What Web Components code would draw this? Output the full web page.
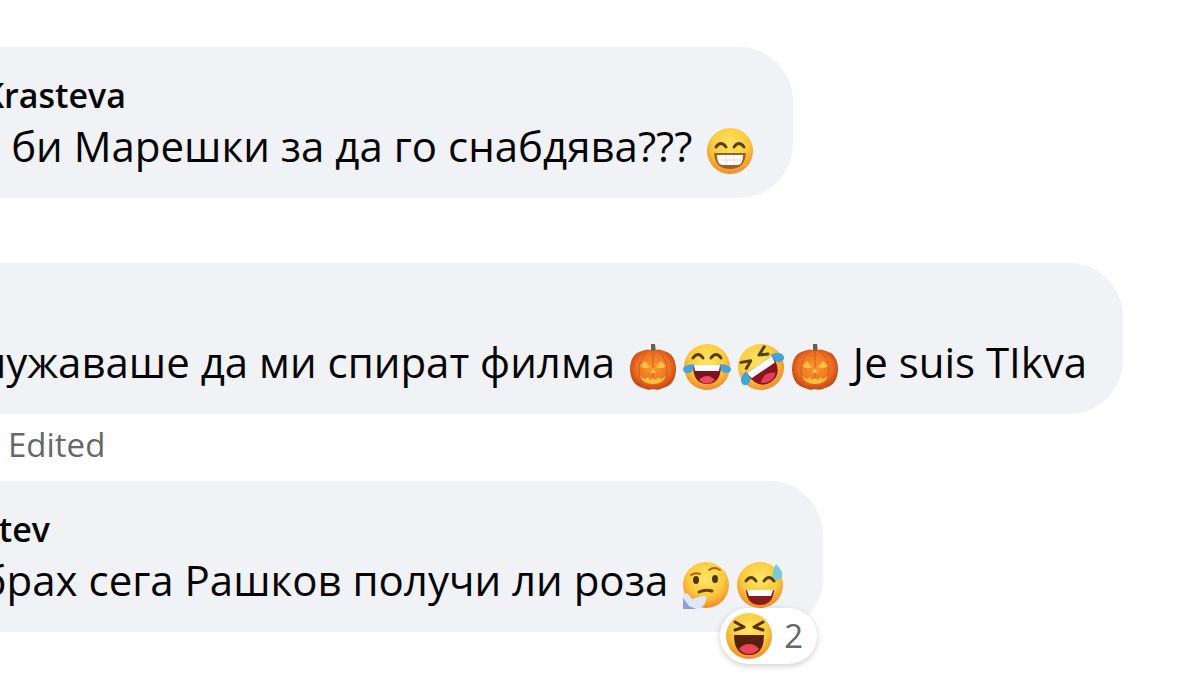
<!DOCTYPE html>
<html lang="bg">
<head>
<meta charset="utf-8">
<meta name="viewport" content="width=device-width, initial-scale=1">
<title>Comments</title>
<style>
  body {
    margin: 0;
    background-color: #ffffff;
    font-family: 'Open Sans', 'Noto Sans', sans-serif;
  }
</style>
</head>
<body>

<comment-thread>
  <comment-item style="--bubble-width: 66.1%; --name-width: 126px">
    <span slot="author">Krasteva</span>
    би Марешки за да го снабдява??? <emoji-icon name="beaming"></emoji-icon>
  </comment-item>
  <comment-item class="spaced" style="--bubble-width: 93.6%">
    лужаваше да ми спират филма <emoji-icon name="pumpkin"></emoji-icon><emoji-icon name="joy"></emoji-icon><emoji-icon name="rofl"></emoji-icon><emoji-icon name="pumpkin"></emoji-icon> Je suis TIkva
    <button slot="actions" type="button">Edited</button>
  </comment-item>
  <comment-item style="--bubble-width: 68.6%; --name-width: 50px">
    <span slot="author">tev</span>
    брах сега Рашков получи ли роза <emoji-icon name="thinking"></emoji-icon><emoji-icon name="sweat"></emoji-icon>
    <reaction-count slot="reactions" count="2"></reaction-count>
  </comment-item>
</comment-thread>

<script>
  const FACE = `
    <defs>
      <radialGradient id="skin" cx="50%" cy="35%" r="65%">
        <stop offset="0" stop-color="#ffe566"/>
        <stop offset="0.6" stop-color="#fcca3e"/>
        <stop offset="1" stop-color="#f08a2c"/>
      </radialGradient>
    </defs>
    <circle cx="24" cy="24" r="23" fill="url(#skin)"/>`;

  const SMILE_EYES = `
    <path d="M10 20q5-7 10 0M28 20q5-7 10 0" fill="none" stroke="#55400f" stroke-width="3" stroke-linecap="round"/>`;

  const EMOJI = {
    beaming: `${FACE}${SMILE_EYES}
      <path d="M8 26h32q-1 16-16 16T8 26z" fill="#9a6420"/>
      <path d="M11 28h26q0 10-6 10H17q-6 0-6-10z" fill="#ffffff"/>
      <path d="M12 33h24M20 28v10M28 28v10" stroke="#e3dfd8" stroke-width="1"/>`,
    joy: `${FACE}
      <path d="M10 15q5-7 10 0M28 15q5-7 10 0" fill="none" stroke="#55400f" stroke-width="3" stroke-linecap="round"/>
      <path d="M10 22h28q0 19-14 19T10 22z" fill="#7a1420"/>
      <path d="M11 22h26l-1 6H12z" fill="#ffffff"/>
      <path d="M16 37q8-8 16 0-8 7-16 0z" fill="#ee4a5c"/>
      <path d="M11 21q0 9-6 9-5 0-5-4 0-4 11-5zM37 21q0 9 6 9 5 0 5-4 0-4-11-5z" fill="#3fa5dc"/>`,
    rofl: `<g transform="rotate(-34 24 24)">${FACE}
      <path d="M10 9l9 4-8 4M38 9l-9 4 8 4" fill="none" stroke="#55400f" stroke-width="3" stroke-linecap="round" stroke-linejoin="round"/>
      <path d="M8 21h32q-1 21-16 21T8 21z" fill="#8a1420"/>
      <path d="M9 21h30l-1 7H10z" fill="#ffffff"/>
      <path d="M15 37q9-8 18 0-9 8-18 0z" fill="#e53e58"/>
      <path d="M9 19q1 12-5 12-5 0-5-4 0-6 10-8zM39 19q-1 12 5 12 5 0 5-4 0-6-10-8z" fill="#3fa5dc"/></g>`,
    pumpkin: `
      <defs>
        <radialGradient id="rind" cx="50%" cy="45%" r="60%">
          <stop offset="0" stop-color="#fb9a2e"/>
          <stop offset="0.6" stop-color="#ee7124"/>
          <stop offset="1" stop-color="#b9380f"/>
        </radialGradient>
      </defs>
      <path d="M22 9l0-8 4 0 1 8z" fill="#6d6048"/>
      <path d="M24 8q5-3 11 0 12 3 12 19-1 15-13 18-5 3-10 1-5 2-10-1Q2 42 1 27 1 11 13 8q6-3 11 0z" fill="url(#rind)"/>
      <path d="M18 9q-9 9-8 20t6 16M30 9q9 9 8 20t-6 16M24 9v36" fill="none" stroke="#d85a1b" stroke-width="1"/>
      <path d="M11 23l5-5 5 6q-5 3-10-1zM37 23l-5-5-5 6q5 3 10-1zM21 30l3-5 3 5z" fill="#ffc042"/>
      <path d="M11 33l5 3 3-2 2 3 3-2 3 2 2-3 3 2 5-3q-3 8-13 8t-13-8z" fill="#ffc042"/>`,
    thinking: `${FACE}
      <path d="M9 14q4-3 9-1M27 9q5-4 11 0" fill="none" stroke="#a8641a" stroke-width="2" stroke-linecap="round"/>
      <ellipse cx="14" cy="19" rx="3" ry="4" fill="#4a3511"/>
      <ellipse cx="33" cy="18" rx="3" ry="4" fill="#4a3511"/>
      <path d="M17 31q6-3 13-1" fill="none" stroke="#6a4514" stroke-width="3" stroke-linecap="round"/>
      <path d="M1 48V35q3-5 6-1l3 4 11-3q5 0 3 4-2 9-10 9z" fill="#dfe6f8"/>
      <path d="M1 48V37l6 8 7 3z" fill="#8d9ee0"/>`,
    sweat: `${FACE}${SMILE_EYES}
      <path d="M10 29h28q-1 15-14 15T10 29z" fill="#8a1c1c"/>
      <path d="M11 29h26l-2 6H13z" fill="#ffffff"/>
      <path d="M40 3q8 8 6 13-3 5-8 2-4-4 2-15z" fill="#79cbdc"/>`,
    laughing: `${FACE}
      <path d="M10 10l9 5-9 3M38 10l-9 5 9 3" fill="none" stroke="#55300f" stroke-width="3" stroke-linecap="round" stroke-linejoin="round"/>
      <path d="M9 23h30q0 20-15 20T9 23z" fill="#56200f"/>
      <path d="M14 37q4-5 10-5t10 5q-4 5-10 5t-10-5z" fill="#ef4358"/>`
  };

  class EmojiIcon extends HTMLElement {
    connectedCallback() {
      if (this.shadowRoot) return;
      const name = this.getAttribute('name');
      this.attachShadow({ mode: 'open' });
      this.shadowRoot.innerHTML = `
        <style>
          :host {
            display: inline-block;
            width: 48px;
            height: 48px;
            margin: 0 3px;
            vertical-align: -13px;
          }

          svg {
            display: block;
            width: 100%;
            height: 100%;
          }
        </style>
        <svg viewBox="0 0 48 48" role="img" aria-label="${name}">${EMOJI[name]}</svg>
      `;
    }
  }

  class ReactionCount extends HTMLElement {
    connectedCallback() {
      if (this.shadowRoot) return;
      this.attachShadow({ mode: 'open' });
      this.shadowRoot.innerHTML = `
        <style>
          :host {
            display: block;
          }

          button {
            display: flex;
            align-items: center;
            gap: 8px;
            padding: 4px 14px 4px 2px;
            border: 0;
            border-radius: 28px;
            background-color: #ffffff;
            box-shadow: 0 2px 6px rgba(0, 0, 0, 0.2);
            color: #65676b;
            font: 33px/48px 'Open Sans', 'Noto Sans', sans-serif;
          }
        </style>
        <button type="button"><emoji-icon name="laughing"></emoji-icon><span></span></button>
      `;
      this.shadowRoot.querySelector('span').textContent = this.getAttribute('count');
    }
  }

  class CommentItem extends HTMLElement {
    constructor() {
      super();
      this.attachShadow({ mode: 'open' });
      this.shadowRoot.innerHTML = `
        <style>
          :host {
            display: block;
          }

          .bubble {
            position: relative;
            box-sizing: border-box;
            width: var(--bubble-width);
            padding: 23px 36px 26px 0;
            border-radius: 0 54px 54px 0;
            background-color: #f0f2f5;
            color: #050505;
          }

          .author {
            display: flex;
            justify-content: flex-end;
            width: var(--name-width, 0);
            height: 50px;
            font-size: 34px;
            font-weight: 600;
            line-height: 50px;
          }

          .message {
            display: flex;
            justify-content: flex-end;
            height: 52px;
            font-size: 42px;
            line-height: 52px;
            white-space: nowrap;
          }

          .reactions {
            position: absolute;
            right: 6px;
            bottom: -32px;
          }

          ::slotted(button) {
            display: block;
            margin: 0 8px;
            padding: 4px 0 10px;
            border: 0;
            background: none;
            color: #65676b;
            font: 33px/53px 'Open Sans', 'Noto Sans', sans-serif;
          }
        </style>
        <div class="bubble">
          <div class="author"><slot name="author"></slot></div>
          <div class="message"><div><slot></slot></div></div>
          <div class="reactions"><slot name="reactions"></slot></div>
        </div>
        <slot name="actions"></slot>
      `;
    }
  }

  class CommentThread extends HTMLElement {
    constructor() {
      super();
      this.attachShadow({ mode: 'open' });
      this.shadowRoot.innerHTML = `
        <style>
          :host {
            display: flex;
            flex-direction: column;
            padding: 47px 0 40px;
            overflow: hidden;
          }

          ::slotted(.spaced) {
            margin-top: 65px;
          }
        </style>
        <slot></slot>
      `;
    }
  }

  customElements.define('emoji-icon', EmojiIcon);
  customElements.define('reaction-count', ReactionCount);
  customElements.define('comment-item', CommentItem);
  customElements.define('comment-thread', CommentThread);
</script>
</body>
</html>
